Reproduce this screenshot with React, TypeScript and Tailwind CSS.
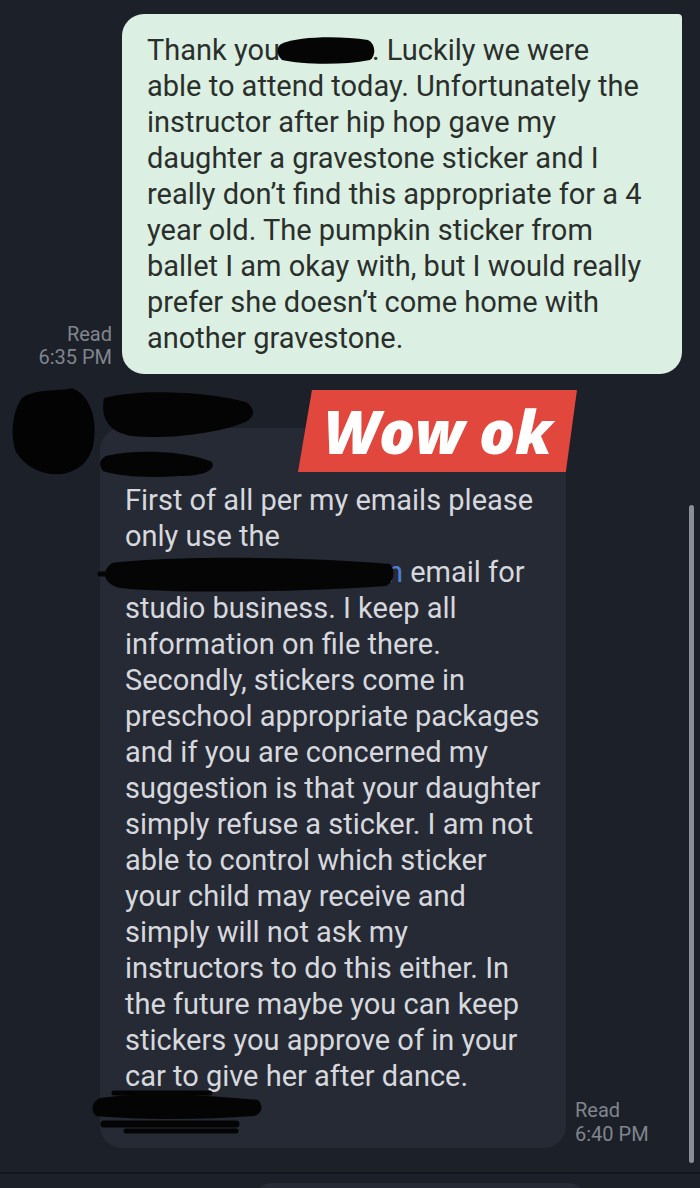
import React from "react";

const sentLines = [
  "__THANK__",
  "able to attend today. Unfortunately the",
  "instructor after hip hop gave my",
  "daughter a gravestone sticker and I",
  "really don’t find this appropriate for a 4",
  "year old. The pumpkin sticker from",
  "ballet I am okay with, but I would really",
  "prefer she doesn’t come home with",
  "another gravestone.",
];

const replyLines = [
  "First of all per my emails please",
  "only use the",
  "__EMAIL__",
  "studio business. I keep all",
  "information on file there.",
  "Secondly, stickers come in",
  "preschool appropriate packages",
  "and if you are concerned my",
  "suggestion is that your daughter",
  "simply refuse a sticker. I am not",
  "able to control which sticker",
  "your child may receive and",
  "simply will not ask my",
  "instructors to do this either. In",
  "the future maybe you can keep",
  "stickers you approve of in your",
  "car to give her after dance.",
];

function Scribbles() {
  return (
    <svg
      className="absolute inset-0 pointer-events-none"
      width="700"
      height="1188"
      viewBox="0 0 700 1188"
    >
      {/* name in first message */}
      <path
        d="M281 44 C300 36 340 36 368 40 C376 44 376 56 370 60 C340 66 300 64 282 60 C276 54 276 48 281 44 Z"
        fill="#050505"
      />
      {/* avatar */}
      <path
        d="M22 398 C36 388 58 392 72 388 C84 392 98 410 94 440 C92 456 84 470 62 474 C44 476 26 468 16 452 C10 436 12 412 22 398 Z"
        fill="#030303"
      />
      {/* sender name */}
      <path
        d="M104 398 C140 388 210 392 246 402 C258 410 254 420 240 424 C220 432 170 440 132 436 C110 432 100 420 104 398 Z"
        fill="#040404"
      />
      <path
        d="M106 456 C140 448 190 452 212 462 C216 470 204 476 180 476 C150 478 122 477 103 471 C98 464 100 459 106 456 Z"
        fill="#040404"
      />
      {/* email address */}
      <path
        d="M112 563 C170 556 300 556 390 564 C396 570 394 582 386 586 C300 592 180 594 120 588 C104 584 100 572 112 563 Z"
        fill="#050505"
      />
      <path d="M100 574 L150 574" stroke="#050505" strokeWidth="5" strokeLinecap="round" />
      {/* signature */}
      <path
        d="M100 1098 C140 1092 200 1094 258 1100 C264 1106 262 1114 254 1116 C200 1120 140 1120 96 1116 C90 1110 92 1102 100 1098 Z"
        fill="#040404"
      />
      <path d="M104 1124 L236 1124" stroke="#040404" strokeWidth="7" strokeLinecap="round" />
      <path d="M126 1131 L236 1131" stroke="#040404" strokeWidth="5" strokeLinecap="round" />
      <path d="M114 1093 L210 1093" stroke="#040404" strokeWidth="5" strokeLinecap="round" />
    </svg>
  );
}

export default function App() {
  return (
    <div className="relative w-[700px] h-[1188px] overflow-hidden bg-[#1c2028] font-['Roboto','Liberation_Sans',sans-serif]">
      {/* Sent message */}
      <div className="flex items-end pt-[14px]">
        <div className="w-[112px] pb-[5px] text-right text-[20px] leading-[23px] text-[#80858e]">
          Read
          <br />
          6:35 PM
        </div>
        <div className="ml-[10px] w-[560px] rounded-[22px] rounded-tr-[4px] bg-[#dcefe3] py-[18px] pl-[25px] pr-[8px] text-[29px] leading-[36px] text-[#2a2f2b]">
          {sentLines.map((line, i) =>
            line === "__THANK__" ? (
              <div key={i} className="whitespace-nowrap">
                Thank you<span className="inline-block w-[92px]" />. Luckily we were
              </div>
            ) : (
              <div key={i} className="whitespace-nowrap">
                {line}
              </div>
            )
          )}
        </div>
      </div>

      {/* Reply */}
      <div className="relative">
        <div className="flex items-end pt-[54px]">
          <div className="ml-[100px] w-[466px] rounded-[22px] bg-[#262a35] pt-[54px] pb-[54px] pl-[25px] text-[29px] leading-[36px] text-[#d6d8dd]">
            {replyLines.map((line, i) =>
              line === "__EMAIL__" ? (
                <div key={i} className="whitespace-nowrap">
                  <span className="inline-block w-[262px]" />
                  <span className="text-[#4d7fd6]">n</span> email for
                </div>
              ) : (
                <div key={i} className="whitespace-nowrap">
                  {line}
                </div>
              )
            )}
          </div>
          <div className="ml-[9px] pb-[2px] text-[20px] leading-[24px] text-[#80858e]">
            Read
            <br />
            6:40 PM
          </div>
        </div>
        <div className="absolute left-[298px] top-[16px] flex h-[82px] w-[279px] items-center justify-center bg-[#e2473d] [clip-path:polygon(5%_0,100%_0,96%_100%,0_100%)]">
          <span className="font-['Open_Sans',sans-serif] text-[60px] font-extrabold italic leading-none tracking-[-0.5px] text-white">
            Wow ok
          </span>
        </div>
      </div>

      {/* Next message peek */}
      <div className="mt-[24px] border-t-2 border-[#14171c] pt-[9px] pl-[255px]">
        <div className="h-[20px] w-[330px] rounded-t-[16px] bg-[#262a35]" />
      </div>

      {/* Scrollbar */}
      <div className="absolute right-[6px] top-[505px] h-[658px] w-[5px] rounded-full bg-[#8b8e96]" />

      <Scribbles />
    </div>
  );
}
